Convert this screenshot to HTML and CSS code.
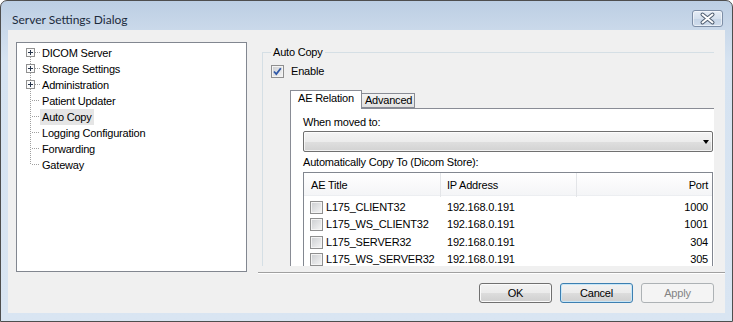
FILE: index.html
```html
<!DOCTYPE html>
<html>
<head>
<meta charset="utf-8">
<title>Server Settings Dialog</title>
<link rel="stylesheet" href="styles.css">
</head>
<body>
<div class="window">
  <div class="titlebar">
    <span class="caption">Server Settings Dialog</span>
    <span class="close">
      <svg width="29" height="15" viewBox="0 0 29 15">
        <path d="M9.5 3.5 L19.5 11.5 M19.5 3.5 L9.5 11.5" stroke="#4f5d70" stroke-width="4" stroke-linecap="round"/>
        <path d="M9.5 3.5 L19.5 11.5 M19.5 3.5 L9.5 11.5" stroke="#fff" stroke-width="2" stroke-linecap="round"/>
      </svg>
    </span>
  </div>

  <div class="client">
    <ul class="tree">
      <li>
        <svg class="gutter" viewBox="0 0 23 16"><path class="dots" d="M13.5 12V16 M18 7.5H23"/><rect class="box" x="9.5" y="3.5" width="8" height="8"/><path class="plus" d="M11 7.5H16 M13.5 5V10"/></svg>
        <span class="label">DICOM Server</span>
      </li>
      <li>
        <svg class="gutter" viewBox="0 0 23 16"><path class="dots" d="M13.5 0V3 M13.5 12V16 M18 7.5H23"/><rect class="box" x="9.5" y="3.5" width="8" height="8"/><path class="plus" d="M11 7.5H16 M13.5 5V10"/></svg>
        <span class="label">Storage Settings</span>
      </li>
      <li>
        <svg class="gutter" viewBox="0 0 23 16"><path class="dots" d="M13.5 0V3 M13.5 12V16 M18 7.5H23"/><rect class="box" x="9.5" y="3.5" width="8" height="8"/><path class="plus" d="M11 7.5H16 M13.5 5V10"/></svg>
        <span class="label">Administration</span>
      </li>
      <li>
        <svg class="gutter" viewBox="0 0 23 16"><path class="dots" d="M13.5 0V16 M15 7.5H23"/></svg>
        <span class="label">Patient Updater</span>
      </li>
      <li class="selected">
        <svg class="gutter" viewBox="0 0 23 16"><path class="dots" d="M13.5 0V16 M15 7.5H23"/></svg>
        <span class="label">Auto Copy</span>
      </li>
      <li>
        <svg class="gutter" viewBox="0 0 23 16"><path class="dots" d="M13.5 0V16 M15 7.5H23"/></svg>
        <span class="label">Logging Configuration</span>
      </li>
      <li>
        <svg class="gutter" viewBox="0 0 23 16"><path class="dots" d="M13.5 0V16 M15 7.5H23"/></svg>
        <span class="label">Forwarding</span>
      </li>
      <li>
        <svg class="gutter" viewBox="0 0 23 16"><path class="dots" d="M13.5 0V8 M15 7.5H23"/></svg>
        <span class="label">Gateway</span>
      </li>
    </ul>

    <div class="pane">
      <div class="viewport">
        <div class="group">
          <div class="group-title">Auto Copy</div>
          <div class="check-row">
            <span class="cb">
              <svg width="11" height="11" viewBox="0 0 11 11"><path d="M2 5.5 L4.3 8 L8.8 2.2" fill="none" stroke="#2f58a8" stroke-width="1.8"/></svg>
            </span>
            <span>Enable</span>
          </div>

          <div class="tabs">
            <span class="tab active">AE Relation</span>
            <span class="tab">Advanced</span>
          </div>
          <div class="tabpanel">
            <div class="field-label">When moved to:</div>
            <div class="combo"><span class="arrow"></span></div>
            <div class="field-label gap">Automatically Copy To (Dicom Store):</div>
            <div class="listview">
              <div class="lv-head">
                <span>AE Title</span>
                <span>IP Address</span>
                <span class="num">Port</span>
              </div>
              <div class="lv-body">
                <div class="lv-row"><span class="name"><span class="cb"></span>L175_CLIENT32</span><span>192.168.0.191</span><span class="num">1000</span></div>
                <div class="lv-row"><span class="name"><span class="cb"></span>L175_WS_CLIENT32</span><span>192.168.0.191</span><span class="num">1001</span></div>
                <div class="lv-row"><span class="name"><span class="cb"></span>L175_SERVER32</span><span>192.168.0.191</span><span class="num">304</span></div>
                <div class="lv-row"><span class="name"><span class="cb"></span>L175_WS_SERVER32</span><span>192.168.0.191</span><span class="num">305</span></div>
              </div>
            </div>
          </div>
        </div>
      </div>
      <div class="sep"></div>
    </div>

    <div class="buttons">
      <span class="btn">OK</span>
      <span class="btn default">Cancel</span>
      <span class="btn disabled">Apply</span>
    </div>
  </div>
</div>
</body>
</html>
```

FILE: styles.css
```css
* { box-sizing: border-box; }
html, body { margin: 0; }
body
{
  background: #fff;
  font: 11px/13px "Liberation Sans", Arial, sans-serif;
  letter-spacing: -0.2px;
  color: #000;
}

/* window frame */
.window
{
  width: 733px;
  height: 322px;
  border: 1px solid #4e4e4e;
  border-radius: 7px 7px 0 0;
  background: linear-gradient(#bccee3, #cad9ea 29px, #d6e3f1 60px, #d9e5f2);
  padding: 0 7px 7px;
}
.titlebar
{
  height: 29px;
  display: flex;
  justify-content: space-between;
  align-items: flex-start;
  padding: 0 2px 0 4px;
}
.caption
{
  margin-top: 11px;
  font: 12px/15px Lato, "Noto Sans", sans-serif;
  letter-spacing: 0;
  color: #1c2b3d;
}
.close
{
  margin-top: 9px;
  width: 31px;
  height: 17px;
  border: 1px solid #7d8ea6;
  border-radius: 3px;
  background: linear-gradient(#e6edf6, #d5e0ed 50%, #c5d4e6 51%, #cfdcec);
  box-shadow: inset 0 0 0 1px rgba(255,255,255,0.55);
  display: flex;
}

/* client area */
.client
{
  height: 283px;
  background: #f0f0f0;
  display: grid;
  grid-template-columns: 231px 467px;
  grid-template-rows: 234px auto;
  column-gap: 11px;
  padding: 10px 0 0 8px;
}

/* tree */
.tree
{
  list-style: none;
  margin: 2px 0 0;
  padding: 2px 0 0;
  height: 230px;
  border: 1px solid #828790;
  background: #fff;
}
.tree li
{
  display: flex;
  align-items: center;
  height: 16px;
}
.tree .gutter { width: 23px; height: 16px; flex: none; }
.tree .dots { stroke: #a0a0a0; stroke-width: 1; stroke-dasharray: 1 1; fill: none; }
.tree .box { fill: #fbfbfb; stroke: #919191; }
.tree .plus { stroke: #26344a; stroke-width: 1; }
.tree .label { padding: 0 2px; line-height: 16px; white-space: nowrap; }
.tree .selected .label { background: #e5e5e5; }

/* right pane */
.pane { display: flex; flex-direction: column; }
.viewport { width: 456px; height: 226px; overflow: hidden; }
.sep
{
  margin-top: 6px;
  height: 2px;
  border-top: 1px solid #a0a0a0;
  border-bottom: 1px solid #fff;
}

.group
{
  margin: 12px 0 0 4px;
  width: 480px;
  height: 260px;
  border: 1px solid #d5dfe5;
}
.group-title
{
  display: table;
  margin: -7px 0 0 8px;
  padding: 0 2px;
  background: #f0f0f0;
}
.check-row
{
  display: flex;
  align-items: center;
  gap: 7px;
  margin: 6px 0 0 8px;
  height: 13px;
}

.cb
{
  width: 13px;
  height: 13px;
  flex: none;
  border: 1px solid #8f8f8f;
  background: linear-gradient(135deg, #cbcdd0, #f6f6f6);
  box-shadow: inset 0 0 0 1px #f4f4f4;
  display: flex;
  align-items: center;
  justify-content: center;
}

/* tabs */
.tabs
{
  display: flex;
  align-items: flex-end;
  height: 18px;
  margin: 12px 0 0 27px;
}
.tab
{
  height: 15px;
  border: 1px solid #898c95;
  border-left: 0;
  padding: 0 2px 0 3px;
  background: linear-gradient(#f3f3f3, #e1e1e1);
  line-height: 13px;
}
.tab.active
{
  position: relative;
  z-index: 1;
  height: 19px;
  margin-bottom: -1px;
  border-left: 1px solid #898c95;
  border-bottom: 0;
  padding: 1px 7px 0;
  background: #fff;
}
.tabpanel
{
  margin-left: 27px;
  width: 437px;
  height: 200px;
  border: 1px solid #898c95;
  background: #fff;
  padding: 7px 13px 0 12px;
}
.field-label.gap { margin-top: 4px; }
.combo
{
  margin-top: 2px;
  height: 21px;
  border: 1px solid #707070;
  border-radius: 2px;
  background: linear-gradient(#f4f4f4, #ececec 50%, #dfdfdf 51%, #d2d2d2);
  box-shadow: inset 0 0 0 1px rgba(255,255,255,0.7);
  display: flex;
  align-items: center;
  justify-content: flex-end;
  padding-right: 3px;
}
.arrow
{
  border-top: 4px solid #000;
  border-left: 3.5px solid transparent;
  border-right: 3.5px solid transparent;
}

/* list view */
.listview
{
  margin-top: 3px;
  height: 120px;
  border: 1px solid #828790;
  background: #fff;
}
.lv-head, .lv-row
{
  display: grid;
  grid-template-columns: 137px 136px 1fr;
}
.lv-head
{
  height: 23px;
  background: linear-gradient(#fff, #f4f5f7);
  border-bottom: 1px solid #eceef1;
}
.lv-head span
{
  line-height: 24px;
  padding-left: 7px;
  border-right: 1px solid #e3e5e8;
}
.lv-head span:nth-child(2) { padding-left: 6px; }
.lv-head .num { border-right: 0; }
.num { text-align: right; padding-right: 4px; }
.lv-body { padding-top: 3px; }
.lv-row
{
  height: 17.33px;
  align-items: center;
}
.lv-row .name
{
  display: flex;
  align-items: center;
  gap: 3px;
  padding-left: 6px;
}
.lv-row span:nth-child(2) { padding-left: 6px; }

/* buttons */
.buttons
{
  grid-column: 1 / -1;
  display: flex;
  justify-content: flex-end;
  gap: 8px;
  margin-top: 9px;
  padding-right: 11px;
}
.btn
{
  width: 73px;
  height: 20px;
  border: 1px solid #707070;
  border-radius: 3px;
  background: linear-gradient(#f2f2f2, #ebebeb 50%, #dddddd 51%, #cfcfcf);
  box-shadow: inset 0 0 0 1px #fafafa;
  text-align: center;
  line-height: 18px;
}
.btn.default
{
  border-color: #3c7fb1;
  box-shadow: inset 0 0 0 1px #c7e6f7;
}
.btn.disabled
{
  border-color: #adb2b5;
  background: #f4f4f4;
  box-shadow: none;
  color: #838383;
}
```
